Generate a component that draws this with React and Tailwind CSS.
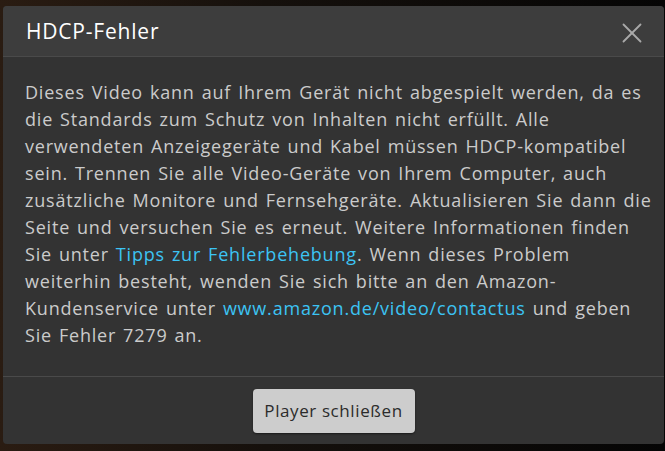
import { X } from "lucide-react";

const Link = ({ children }) => <a className="text-[#3cc4f4]">{children}</a>;

export default function App() {
  return (
    <div
      className="w-[665px] h-[451px] overflow-hidden bg-[linear-gradient(90deg,#2a1c12_0%,#15100c_40%,#050505_100%)] pt-[6px] pl-[3px] pr-[1px]"
      style={{ fontFamily: '"Open Sans", "Noto Sans", sans-serif' }}
    >
      <div className="w-[661px] h-[438px] rounded-[4px] bg-[#333333] flex flex-col overflow-hidden">
        {/* HEADER */}
        <div className="h-[51px] shrink-0 bg-[#3d3d3d] border-b border-[#4a4a4a] flex items-center justify-between pl-[23px] pr-[15px]">
          <h1 className="text-[21px] tracking-[0.8px] text-white leading-none">HDCP-Fehler</h1>
          <button className="text-[#a9a9a9] p-0 mt-[4px]">
            <X size={34} strokeWidth={1.3} />
          </button>
        </div>

        {/* BODY */}
        <div className="flex-1 pt-[22px] pl-[22px] pr-[6px] border-b border-[#4a4a4a]">
          <p className="text-[18px] leading-[27px] tracking-[0.8px] [word-spacing:1.5px] text-[#cbcbcb]">
            Dieses Video kann auf Ihrem Gerät nicht abgespielt werden, da es<br />
            die Standards zum Schutz von Inhalten nicht erfüllt. Alle<br />
            verwendeten Anzeigegeräte und Kabel müssen HDCP-kompatibel<br />
            sein. Trennen Sie alle Video-Geräte von Ihrem Computer, auch<br />
            zusätzliche Monitore und Fernsehgeräte. Aktualisieren Sie dann die<br />
            Seite und versuchen Sie es erneut. Weitere Informationen finden<br />
            Sie unter <Link>Tipps zur Fehlerbehebung</Link>. Wenn dieses Problem<br />
            weiterhin besteht, wenden Sie sich bitte an den Amazon-<br />
            Kundenservice unter <Link>www.amazon.de/video/contactus</Link> und geben<br />
            Sie Fehler 7279 an.
          </p>
        </div>

        {/* FOOTER */}
        <div className="h-[67px] shrink-0 flex items-center justify-center">
          <button className="w-[162px] h-[44px] rounded-[4px] bg-[#cdcdcd] text-[#2b2b2b] text-[17px] tracking-[0.6px] shadow-[0_1px_2px_rgba(0,0,0,0.5)]">
            Player schließen
          </button>
        </div>
      </div>
    </div>
  );
}
